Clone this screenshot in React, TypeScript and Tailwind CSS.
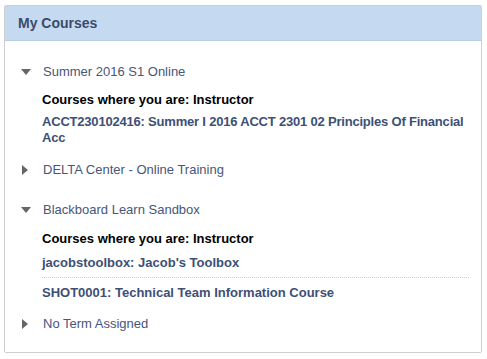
import React from "react"

function Down() {
  return (
    <svg width="10" height="8" viewBox="0 0 10 8" className="shrink-0">
      <polygon points="0,1 10,1 5,7" fill="#666" />
    </svg>
  )
}

function Right() {
  return (
    <svg width="8" height="10" viewBox="0 0 8 10" className="shrink-0">
      <polygon points="1,0 7,5 1,10" fill="#666" />
    </svg>
  )
}

function Term({ title, open, children }: { title: string; open?: boolean; children?: React.ReactNode }) {
  return (
    <div>
      <div className="flex items-center h-[20px]">
        <div className="w-[23px] flex justify-start pl-[1px]">{open ? <Down /> : <Right />}</div>
        <span className="text-[13px] text-[#46567c]">{title}</span>
      </div>
      {children}
    </div>
  )
}

export default function App() {
  return (
    <div className="p-[4px] pt-[5px] bg-white" style={{ fontFamily: '"Liberation Sans", Arial, sans-serif' }}>
      <div className="w-[478px] h-[348px] border border-[#cfcfcf] rounded-[2px] bg-white">
        <div className="h-[35px] bg-[#c5daf0] border-b border-[#b9cde4] flex items-center pl-[13px]">
          <h2 className="text-[14px] font-bold text-[#3b4a6b]">My Courses</h2>
        </div>
        <div className="pl-[15px] pr-[8px] pt-[21px]">
          <Term title="Summer 2016 S1 Online" open>
            <div className="pl-[22px] pt-[10px] pb-[3px]">
              <div className="text-[13px] font-bold text-black leading-[16px]">Courses where you are: Instructor</div>
              <div className="text-[13px] font-bold text-[#3e4f76] leading-[16px] mt-[6px] tracking-[-0.2px]">
                ACCT230102416: Summer I 2016 ACCT 2301 02 Principles Of Financial Acc
              </div>
            </div>
          </Term>
          <div className="mt-[11px]">
            <Term title="DELTA Center - Online Training" />
          </div>
          <div className="mt-[20px]">
            <Term title="Blackboard Learn Sandbox" open>
              <div className="pl-[22px] pt-[11px]">
                <div className="text-[13px] font-bold text-black leading-[16px]">Courses where you are: Instructor</div>
                <div className="text-[13px] font-bold text-[#3e4f76] leading-[16px] mt-[8px] pb-[6px] border-b border-dotted border-[#d0d0d0] mr-[4px]">
                  jacobstoolbox: Jacob's Toolbox
                </div>
                <div className="text-[13px] font-bold text-[#3e4f76] leading-[16px] mt-[7px]">
                  SHOT0001: Technical Team Information Course
                </div>
              </div>
            </Term>
          </div>
          <div className="mt-[13px]">
            <Term title="No Term Assigned" />
          </div>
        </div>
      </div>
    </div>
  )
}
